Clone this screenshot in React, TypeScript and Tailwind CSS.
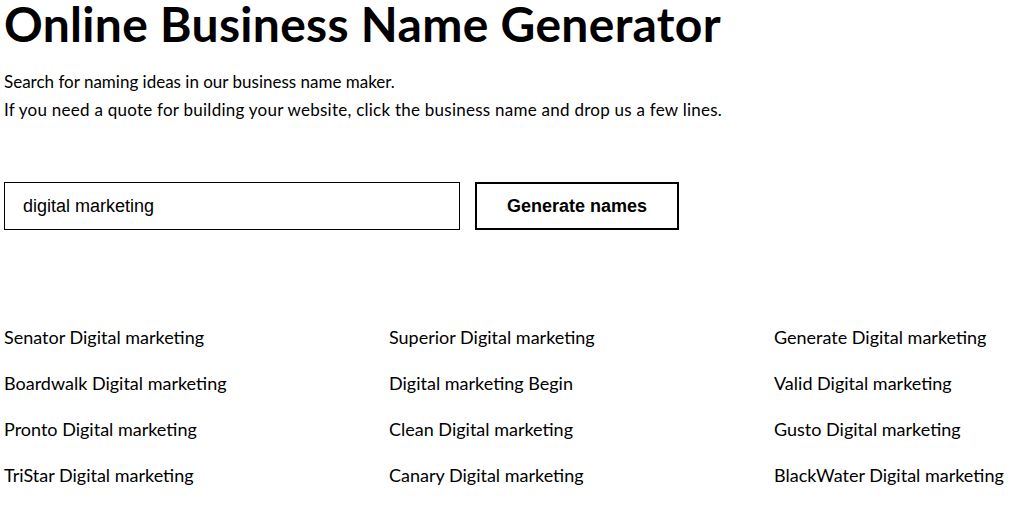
import React from "react";

const names: string[][] = [
  ["Senator Digital marketing", "Superior Digital marketing", "Generate Digital marketing"],
  ["Boardwalk Digital marketing", "Digital marketing Begin", "Valid Digital marketing"],
  ["Pronto Digital marketing", "Clean Digital marketing", "Gusto Digital marketing"],
  ["TriStar Digital marketing", "Canary Digital marketing", "BlackWater Digital marketing"],
];

export default function App() {
  return (
    <div className="min-h-[507px] overflow-hidden bg-white px-1 font-['Lato',sans-serif] text-black">
      <h1 className="text-[48px] leading-[48px] font-bold tracking-[0.3px]">Online Business Name Generator</h1>

      <div className="mt-[20px] text-[17px] leading-[28px]">
        <p>Search for naming ideas in our business name maker.</p>
        <p className="tracking-[0.25px]">
          If you need a quote for building your website, click the business name and drop us a few lines.
        </p>
      </div>

      <form className="mt-[58px] flex gap-[15px]" onSubmit={(e) => e.preventDefault()}>
        <input
          defaultValue="digital marketing"
          className="h-12 w-[456px] border border-black px-[18px] font-['Liberation_Sans',sans-serif] text-[18px] outline-none"
        />
        <button
          type="submit"
          className="h-12 w-[204px] border-2 border-black font-['Liberation_Sans',sans-serif] text-[18px] font-bold"
        >
          Generate names
        </button>
      </form>

      <div className="mt-[93px] grid grid-cols-[385px_385px_1fr] gap-y-[18px] text-[18px] leading-[28px]">
        {names.flat().map((n) => (
          <a key={n} href="#" className="block">
            {n}
          </a>
        ))}
      </div>
    </div>
  );
}
